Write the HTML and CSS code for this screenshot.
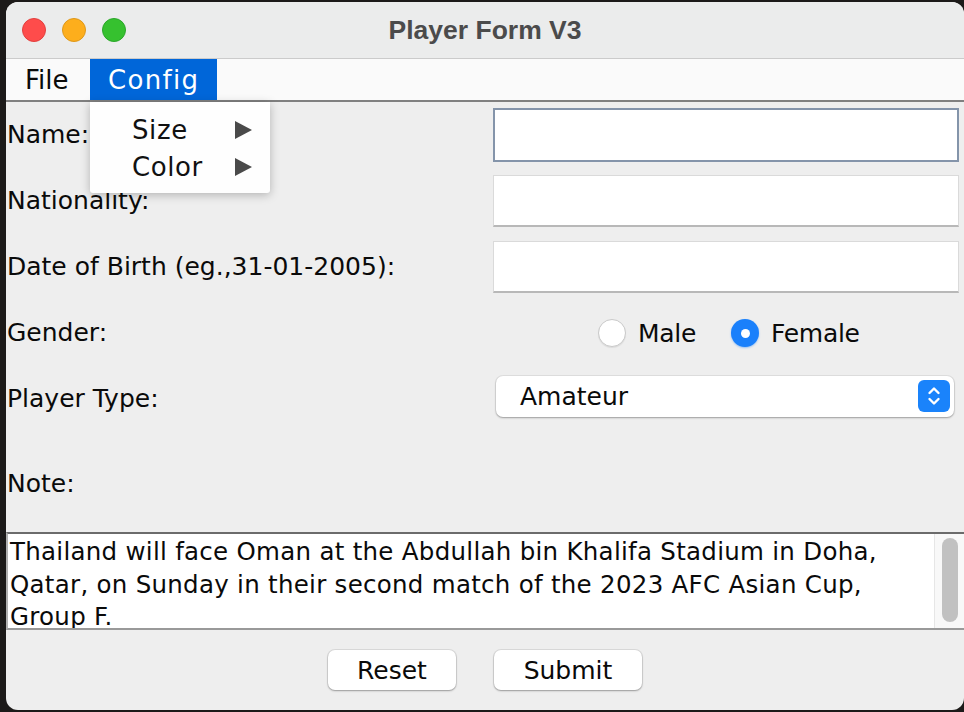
FILE: index.html
```html
<!DOCTYPE html>
<html>
<head>
<meta charset="utf-8">
<link rel="stylesheet" href="styles.css">
</head>
<body>
<div class="window">
  <div class="titlebar">
    <div class="lights">
      <span class="light red"></span>
      <span class="light yellow"></span>
      <span class="light green"></span>
    </div>
    <div class="title">Player Form V3</div>
  </div>
  <div class="menubar">
    <div class="menu-item">File</div>
    <div class="menu-item active">Config</div>
    <div class="popup">
      <div class="popup-item"><span>Size</span><span class="arrow"></span></div>
      <div class="popup-item"><span>Color</span><span class="arrow"></span></div>
    </div>
  </div>
  <div class="form">
    <div class="label">Name:</div>
    <div class="field focused"></div>
    <div class="label">Nationality:</div>
    <div class="field"></div>
    <div class="label">Date of Birth (eg.,31-01-2005):</div>
    <div class="field"></div>
    <div class="label">Gender:</div>
    <div class="radios">
      <span class="radio"></span><span class="radio-label male">Male</span>
      <span class="radio checked"></span><span class="radio-label">Female</span>
    </div>
    <div class="label">Player Type:</div>
    <div class="combo">
      <span class="combo-value">Amateur</span>
      <span class="combo-btn">
        <svg width="14" height="22" viewBox="0 0 14 22"><path d="M2.5 8 L7 3.5 L11.5 8 M2.5 14 L7 18.5 L11.5 14" fill="none" stroke="#fff" stroke-width="2.4" stroke-linecap="round" stroke-linejoin="round"/></svg>
      </span>
    </div>
    <div class="label note">Note:</div>
    <div></div>
  </div>
  <div class="textarea">
    <div class="text">Thailand will face Oman at the Abdullah bin Khalifa Stadium in Doha,<br>Qatar, on Sunday in their second match of the 2023 AFC Asian Cup,<br>Group F.</div>
    <div class="scrollbar"><div class="thumb"></div></div>
  </div>
  <div class="buttons">
    <div class="button reset">Reset</div>
    <div class="button submit">Submit</div>
  </div>
</div>
</body>
</html>
```
FILE: styles.css
```css
html, body {
  margin: 0;
  padding: 0;
  background: #1c1a19;
  width: 964px;
  height: 712px;
  overflow: hidden;
}
.window {
  margin: 2px 0 0 6px;
  width: 958px;
  height: 708px;
  border-radius: 12px;
  overflow: hidden;
  background: #eeeeee;
  display: flex;
  flex-direction: column;
  font-family: "DejaVu Sans", sans-serif;
  color: #0a0a0a;
}
.titlebar {
  height: 56px;
  flex: none;
  background: #ebecec;
  border-bottom: 1px solid #cbcbcb;
  display: flex;
  align-items: center;
  position: relative;
}
.lights {
  display: flex;
  gap: 16px;
  padding-left: 16px;
}
.light {
  width: 24px;
  height: 24px;
  border-radius: 50%;
  box-sizing: border-box;
}
.red { background: #fe4c4b; border: 1px solid #e2403e; }
.yellow { background: #fdae1c; border: 1px solid #de981a; }
.green { background: #36c12f; border: 1px solid #2ba72a; }
.title {
  position: absolute;
  left: 0;
  right: 0;
  top: 0;
  bottom: 0;
  display: flex;
  align-items: center;
  justify-content: center;
  font-family: "Liberation Sans", sans-serif;
  font-weight: bold;
  font-size: 26.5px;
  color: #4b4b4b;
}
.menubar {
  height: 41px;
  flex: none;
  background: #fafafa;
  border-bottom: 2px solid #808080;
  display: flex;
  position: relative;
  font-size: 26px;
}
.menu-item {
  display: flex;
  align-items: center;
  padding: 0 19px;
}
.menu-item.active {
  background: #0066d9;
  color: #fff;
  padding: 0 0 0 18px;
  width: 127px;
  box-sizing: border-box;
  letter-spacing: 1.3px;
}
.menu-item:first-child {
  width: 84px;
  box-sizing: border-box;
}
.popup {
  position: absolute;
  left: 84px;
  top: 43px;
  width: 180px;
  height: 91px;
  background: #fefefe;
  box-shadow: 0 2px 10px rgba(0, 0, 0, 0.25);
  border-radius: 0 0 3px 3px;
  display: flex;
  flex-direction: column;
  padding-top: 9px;
  box-sizing: border-box;
  z-index: 5;
}
.popup-item {
  height: 37px;
  display: flex;
  align-items: center;
  justify-content: space-between;
  padding: 0 18px 0 42px;
  color: #111;
}
.popup-item span:first-child {
  letter-spacing: 0.6px;
}
.arrow {
  width: 0;
  height: 0;
  border-top: 9px solid transparent;
  border-bottom: 9px solid transparent;
  border-left: 17px solid #4a4a4a;
}
.form {
  display: grid;
  grid-template-columns: 486px 1fr;
  grid-template-rows: 66px 66px 66px 66px 66px 100px;
  align-items: center;
  padding: 0 5px 0 1px;
  font-size: 25px;
  flex: none;
}
.label {
  white-space: nowrap;
  position: relative;
  top: -1px;
}
.field {
  height: 52px;
  background: #fff;
  border: 1px solid #dadada;
  border-bottom: 2px solid #b8b8b8;
  box-sizing: border-box;
}
.field.focused {
  height: 54px;
  border: 2px solid #8494aa;
}
.radios {
  display: flex;
  align-items: center;
  padding-left: 105px;
}
.radio {
  width: 28px;
  height: 28px;
  border-radius: 50%;
  box-sizing: border-box;
  background: #fff;
  border: 1px solid #c9c9c9;
  box-shadow: 0 1px 1px rgba(0,0,0,0.08);
  display: flex;
  align-items: center;
  justify-content: center;
}
.radio.checked {
  background: #1a80fb;
  border: none;
  box-shadow: 0 1px 2px rgba(26,128,251,0.4);
}
.radio.checked::after {
  content: "";
  width: 9px;
  height: 9px;
  border-radius: 50%;
  background: #fff;
}
.radio-label {
  margin: 0 0 0 12px;
  letter-spacing: -0.3px;
}
.radio-label.male {
  margin-right: 35px;
}
.combo {
  height: 41px;
  margin: 0 5px 6px 3px;
  background: #fff;
  border-radius: 7px;
  box-shadow: 0 0 0 1px rgba(0,0,0,0.06), 0 1px 2px rgba(0,0,0,0.3);
  display: flex;
  align-items: center;
  justify-content: space-between;
  padding: 0 4px 0 24px;
}
.combo-btn {
  width: 32px;
  height: 32px;
  border-radius: 6px;
  background: #1a83fb;
  display: flex;
  align-items: center;
  justify-content: center;
}
.note {
  top: 1px;
}
.textarea {
  height: 98px;
  flex: none;
  box-sizing: border-box;
  border-top: 2px solid #6b6b6b;
  border-bottom: 2px solid #999;
  border-left: 2px solid #b0b0b0;
  background: #fff;
  display: flex;
  overflow: hidden;
}
.text {
  flex: 1;
  font-size: 24.5px;
  letter-spacing: 0.28px;
  line-height: 32.5px;
  padding: 2px 0 0 2px;
  white-space: nowrap;
  overflow: hidden;
}
.scrollbar {
  width: 30px;
  flex: none;
  background: #f8f8f8;
  border-left: 1px solid #e6e6e6;
  padding: 4px 0 0 7px;
  box-sizing: border-box;
}
.thumb {
  width: 16px;
  height: 84px;
  border-radius: 8px;
  background: #c1c1c1;
}
.buttons {
  flex: 1;
  display: flex;
  justify-content: center;
  align-items: flex-start;
  gap: 38px;
  padding-top: 20px;
  font-size: 25px;
}
.button {
  height: 40px;
  background: #fff;
  border-radius: 7px;
  box-shadow: 0 0 0 1px rgba(0,0,0,0.08), 0 1px 2px rgba(0,0,0,0.3);
  display: flex;
  align-items: center;
  justify-content: center;
  box-sizing: border-box;
}
.reset { width: 128px; }
.submit { width: 148px; }
```
